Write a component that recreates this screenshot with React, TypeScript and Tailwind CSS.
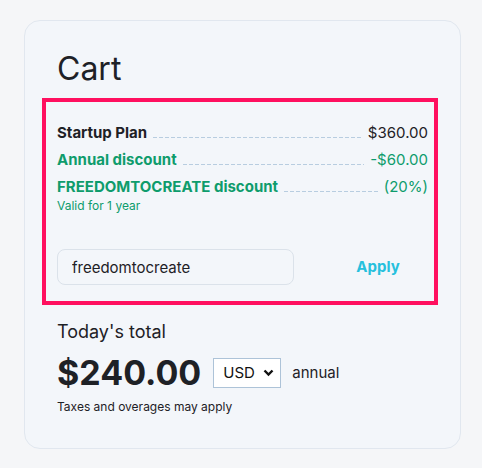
import { useState } from 'react';

interface LineItem {
  label: string;
  value: string;
  green?: boolean;
}

const items: LineItem[] = [
  { label: 'Startup Plan', value: '$360.00' },
  { label: 'Annual discount', value: '-$60.00', green: true },
  { label: 'FREEDOMTOCREATE discount', value: '(20%)', green: true },
];

const Row = ({ label, value, green }: LineItem) => (
  <div className={`flex items-end text-[15px] leading-[27px] ${green ? 'text-[#0e9c6c]' : 'text-[#1e2126]'}`}>
    <span className="font-bold whitespace-nowrap">{label}</span>
    {/* dotted leader */}
    <div className="flex-1 h-px mx-[6px] mb-[8px] bg-[repeating-linear-gradient(90deg,#b8cde0_0_4px,transparent_4px_6px)]"></div>
    <span className="whitespace-nowrap">{value}</span>
  </div>
);

export default function App() {
  const [code, setCode] = useState('freedomtocreate');

  return (
    <div className="min-h-screen bg-[#f5f6f8] pt-[20px] pl-[24px] font-['Inter','Liberation_Sans',sans-serif]">
      <div className="w-[437px] rounded-2xl border border-[#e1e7ef] bg-[#f3f6fa] pt-[28px] pb-[33px] pl-[32px] pr-[32px]">
        <h1 className="text-[32px] leading-[40px] font-normal text-[#1e2126]">Cart</h1>

        {/* highlighted summary */}
        <div className="mt-[9px] ml-[-15px] mr-[-10px] border-4 border-[#ff105f] pt-[17px] pb-[16px] pl-[11px] pr-[6px]">
          {items.map((item) => (
            <Row key={item.label} {...item} />
          ))}
          <p className="text-[12px] leading-[12px] text-[#0e9c6c]">Valid for 1 year</p>

          <div className="mt-[37px] flex items-center justify-between">
            <input
              value={code}
              onChange={(e) => setCode(e.target.value)}
              className="w-[237px] h-[36px] rounded-lg border border-[#dbe2ea] bg-[#f3f6fa] pl-[14px] text-[15px] text-[#1e2126] outline-none"
            />
            <button className="w-[100px] text-center text-[15px] font-bold text-[#26c0dd]">Apply</button>
          </div>
        </div>

        <p className="mt-[13px] text-[18px] leading-[28px] text-[#1e2126]">Today's total</p>
        <div className="mt-[7px] flex items-center">
          <span className="text-[34px] leading-[40px] font-bold text-[#1e2126]">$240.00</span>
          <div className="relative ml-[12px] w-[68px] h-[30px] border border-[#adc3d8] bg-white flex items-center">
            <select className="appearance-none w-full h-full bg-transparent pl-[9px] text-[15px] text-[#111] outline-none">
              <option>USD</option>
            </select>
            <svg className="absolute right-[6px] top-[10px] pointer-events-none" width="11" height="8" viewBox="0 0 11 8">
              <path d="M1.5 1.5 L5.5 5.5 L9.5 1.5" fill="none" stroke="#111" strokeWidth="2.4" />
            </svg>
          </div>
          <span className="ml-[11px] text-[15px] text-[#1e2126]">annual</span>
        </div>
        <p className="mt-[6px] text-[12px] leading-[16px] text-[#1e2126]">Taxes and overages may apply</p>
      </div>
    </div>
  );
}
